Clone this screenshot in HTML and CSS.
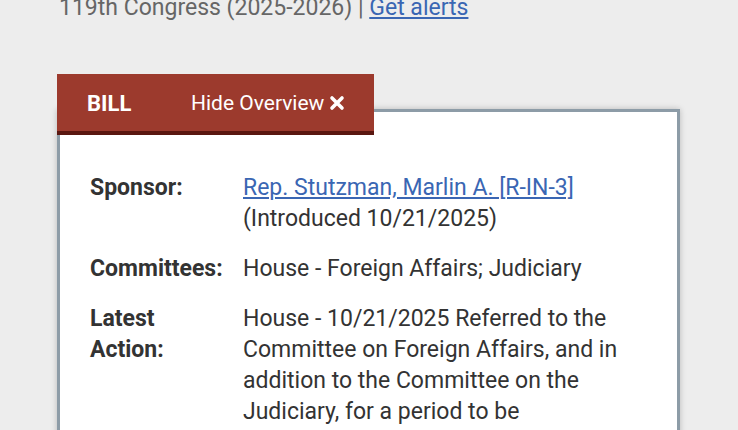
FILE: index.html
```html
<!DOCTYPE html>
<html>
<head>
<meta charset="utf-8">
<link rel="stylesheet" href="styles.css">
</head>
<body>
<div class="page">
  <p class="congress">119th Congress (2025-2026) | <a href="#">Get alerts</a></p>
  <div class="overview">
    <div class="tab">
      <span class="tab-title">BILL</span>
      <span class="tab-toggle">Hide Overview
        <svg class="x-icon" viewBox="0 0 16 16" width="16" height="16"><path d="M3 3 L13 13 M13 3 L3 13" stroke="#fff" stroke-width="3.6" stroke-linecap="round"/></svg>
      </span>
    </div>
    <div class="card">
      <div class="row">
        <div class="label">Sponsor:</div>
        <div class="value"><a href="#">Rep. Stutzman, Marlin A. [R-IN-3]</a><br>(Introduced 10/21/2025)</div>
      </div>
      <div class="row">
        <div class="label">Committees:</div>
        <div class="value">House - Foreign Affairs; Judiciary</div>
      </div>
      <div class="row">
        <div class="label">Latest<br>Action:</div>
        <div class="value">House - 10/21/2025 Referred to the Committee on Foreign Affairs, and in addition to the Committee on the Judiciary, for a period to be subsequently determined by the Speaker, in each case for consideration of such provisions as fall within the jurisdiction of the committee concerned.</div>
      </div>
    </div>
  </div>
</div>
</body>
</html>
```

FILE: styles.css
```css
html, body {
  margin: 0;
  padding: 0;
  background: #ededed;
  overflow: hidden;
}
body {
  font-family: Roboto, "Liberation Sans", sans-serif;
  font-size: 23px;
  line-height: 31px;
  color: #333;
}
.page {
  padding: 0 58px 0 57px;
}
a {
  color: #3a66b3;
  text-decoration: underline;
  text-underline-offset: 2px;
}
.congress {
  margin: -8px 0 0 2px;
  color: #666;
}
.overview {
  margin-top: 51px;
}
.tab {
  position: relative;
  z-index: 2;
  width: 317px;
  height: 61px;
  box-sizing: border-box;
  background: #9c3a2d;
  border-bottom: 4px solid #5a1710;
  display: flex;
  align-items: center;
  padding-left: 30px;
  padding-top: 2px;
  color: #fff;
}
.tab-title {
  font-weight: 700;
  font-size: 22px;
  width: 104px;
}
.tab-toggle {
  display: flex;
  align-items: center;
  gap: 5px;
  font-size: 21px;
}
.x-icon {
  display: block;
  margin-top: -2px;
}
.card {
  position: relative;
  z-index: 1;
  margin-top: -26px;
  width: 623px;
  box-sizing: border-box;
  background: #fff;
  border: 3px solid #8d9ca7;
  box-shadow: 0 0 6px rgba(0,0,0,0.22);
  padding: 60px 30px 40px 30px;
  display: flex;
  flex-direction: column;
  gap: 19px;
}
.row {
  display: flex;
}
.label {
  width: 153px;
  flex: none;
  font-weight: 700;
}
.value {
  flex: 1;
}
```
